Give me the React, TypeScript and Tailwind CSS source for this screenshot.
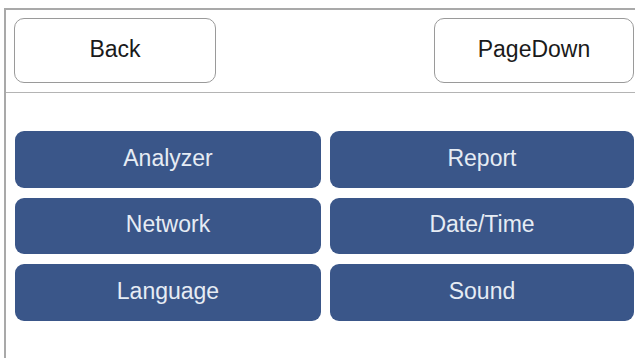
const items = ['Analyzer', 'Report', 'Network', 'Date/Time', 'Language', 'Sound'];

function App() {
  return (
    <div
      className="w-[635px] h-[358px] bg-white pt-2 pl-1 overflow-hidden"
      style={{ fontFamily: '"Liberation Sans", Arial, sans-serif' }}
    >
      <div className="h-full border-l-2 border-t-2 border-[#a9a9a9]">
        <div className="flex justify-between items-center pl-2 pr-[1px] pt-2 pb-[9px] border-b border-[#b4b4b4]">
          <button className="w-[202px] h-[65px] pb-[2px] rounded-[10px] border border-[#9a9a9a] bg-white text-[23px] text-[#1a1a1a]">
            Back
          </button>
          <button className="w-[200px] h-[65px] pb-[2px] rounded-[10px] border border-[#9a9a9a] bg-white text-[23px] text-[#1a1a1a]">
            PageDown
          </button>
        </div>
        <div className="grid grid-cols-[306px_1fr] gap-x-[9px] gap-y-[10px] mt-[38px] pl-[9px] pr-[1px]">
          {items.map(item => (
            <button
              key={item}
              className="h-[56.5px] pb-[3px] rounded-[9px] bg-[#3a5689] text-[#e6ecf4] text-[23px]"
            >
              {item}
            </button>
          ))}
        </div>
      </div>
    </div>
  );
}

export default App;
